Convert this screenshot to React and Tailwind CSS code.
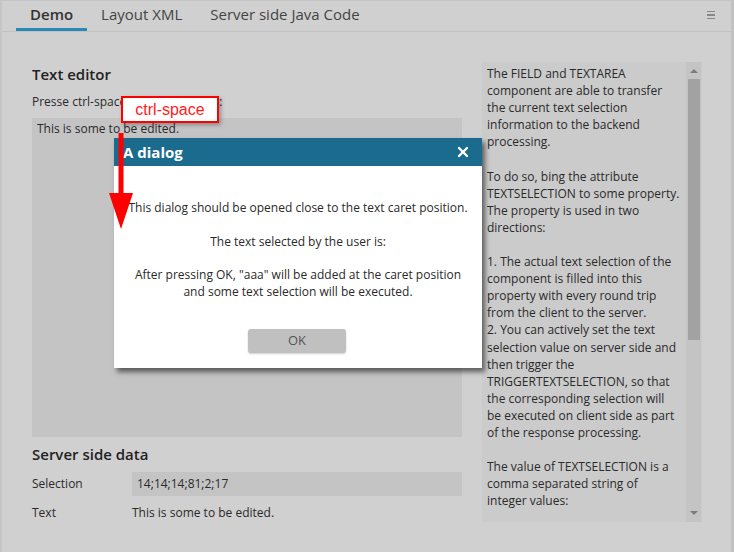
import React from 'react';
import { X } from 'lucide-react';

const helpLines = [
  'The FIELD and TEXTAREA',
  'component are able to transfer',
  'the current text selection',
  'information to the backend',
  'processing.',
  '',
  'To do so, bing the attribute',
  'TEXTSELECTION to some property.',
  'The property is used in two',
  'directions:',
  '',
  '1. The actual text selection of the',
  'component is filled into this',
  'property with every round trip',
  'from the client to the server.',
  '2. You can actively set the text',
  'selection value on server side and',
  'then trigger the',
  'TRIGGERTEXTSELECTION, so that',
  'the corresponding selection will',
  'be executed on client side as part',
  'of the response processing.',
  '',
  'The value of TEXTSELECTION is a',
  'comma separated string of',
  'integer values:',
];

const App = () => {
  return (
    <div
      className="relative w-[734px] h-[552px] overflow-hidden bg-[#d0d0d0] text-[#2a2a2a] border-l-2 border-l-[#c6c6c6] border-r-[3px] border-r-[#c2c2c2] border-t border-t-[#c4c4c4]"
      style={{ fontFamily: '"Open Sans", sans-serif' }}
    >
      {/* tab bar */}
      <div className="flex items-stretch h-[31px] border-b border-[#c2c2c2] pl-[14px] pr-[16px]">
        <div className="flex items-center px-[14px] border-b-[3px] border-[#2a88b8] text-[15px] font-semibold text-[#333]">
          Demo
        </div>
        <div className="flex items-center ml-[14px] pb-[3px] text-[15px] text-[#444]">Layout XML</div>
        <div className="flex items-center ml-[28px] pb-[3px] text-[15px] text-[#444]">Server side Java Code</div>
        <div className="ml-auto flex flex-col justify-center gap-[2px] w-[8px] pb-[2px]">
          <div className="h-[1.5px] bg-[#888]" />
          <div className="h-[1.5px] bg-[#888]" />
          <div className="h-[1.5px] bg-[#888]" />
        </div>
      </div>

      {/* content */}
      <div className="flex gap-[20px] pt-[30px] pl-[30px]">
        <div className="w-[430px] flex flex-col">
          <div className="mt-[2px] text-[15px] leading-[20px] font-semibold text-[#222]">Text editor</div>
          <div className="mt-[10px] text-[12px] leading-[16px]">Presse ctrl-space to open a dialog:</div>
          <div className="mt-[8px] h-[319px] bg-[#c4c4c4] px-[5px] py-[3px] text-[12px] leading-[16px]">
            This is some to be edited.
          </div>
          <div className="mt-[7px] text-[15px] leading-[20px] font-semibold text-[#222]">Server side data</div>
          <div className="mt-[8px] flex items-center h-[24px] text-[12px]">
            <div className="w-[100px]">Selection</div>
            <div className="flex-1 h-full bg-[#c4c4c4] flex items-center px-[5px]">14;14;14;81;2;17</div>
          </div>
          <div className="mt-[9px] flex items-center h-[16px] text-[12px]">
            <div className="w-[100px]">Text</div>
            <div>This is some to be edited.</div>
          </div>
        </div>

        <div className="w-[220px] h-[460px] bg-[#cbcbcb] flex">
          <div className="flex-1 pl-[5px] pt-[3px] text-[12px] leading-[17.1px] whitespace-nowrap overflow-hidden">
            {helpLines.map((l, i) => (
              <div key={i} className="h-[17.1px]">{l}</div>
            ))}
          </div>
          <div className="w-[15px] mr-[1px] bg-[#c4c4c4] flex flex-col items-center">
            <div className="mt-[7px] w-0 h-0 border-l-[4px] border-r-[4px] border-b-[4px] border-l-transparent border-r-transparent border-b-[#7c7c7c]" />
            <div className="mt-[6px] w-[12px] h-[261px] bg-[#a2a2a2]" />
            <div className="mt-auto mb-[7px] w-0 h-0 border-l-[4px] border-r-[4px] border-t-[4px] border-l-transparent border-r-transparent border-t-[#7c7c7c]" />
          </div>
        </div>
      </div>

      {/* dialog */}
      <div className="absolute left-[112px] top-[137px] w-[368px] h-[230px] bg-white flex flex-col shadow-[3px_4px_5px_rgba(0,0,0,0.55)]">
        <div className="h-[28px] bg-[#1b6b8f] flex items-center justify-between pl-[9px] pr-[11px]">
          <span className="text-white text-[15px] font-bold">A dialog</span>
          <X className="w-[16px] h-[16px] text-white" strokeWidth={3.5} />
        </div>
        <div className="pt-[33px] text-center text-[12px] leading-[17px] text-[#2a2a2a]">
          <div>This dialog should be opened close to the text caret position.</div>
          <div className="h-[17px]" />
          <div>The text selected by the user is:</div>
          <div className="h-[16px]" />
          <div>After pressing OK, "aaa" will be added at the caret position</div>
          <div>and some text selection will be executed.</div>
        </div>
        <div className="mt-[29px] flex justify-center">
          <div className="w-[98px] h-[24px] -ml-[2px] rounded-[3px] bg-[#c0c0c0] flex items-center justify-center text-[13px] text-[#555] shadow-[0_1px_2px_rgba(0,0,0,0.2)]">
            OK
          </div>
        </div>
      </div>

      {/* callout */}
      <div
        className="absolute left-[119px] top-[95px] w-[98px] h-[27px] bg-white border-2 border-[#ff0000] flex items-center justify-center text-[16px] text-[#ff1a1a] shadow-[2px_2px_4px_rgba(0,0,0,0.3)]"
        style={{ fontFamily: '"Liberation Sans", Arial, sans-serif' }}
      >
        ctrl-space
      </div>

      {/* arrow */}
      <svg className="absolute left-[107px] top-[129px]" width="30" height="104" viewBox="0 0 30 104">
        <rect x="9.5" y="3" width="5" height="64" fill="#ff0000" />
        <polygon points="0,63 24,63 12,99" fill="#ff0000" />
      </svg>
    </div>
  );
};

export default App;
